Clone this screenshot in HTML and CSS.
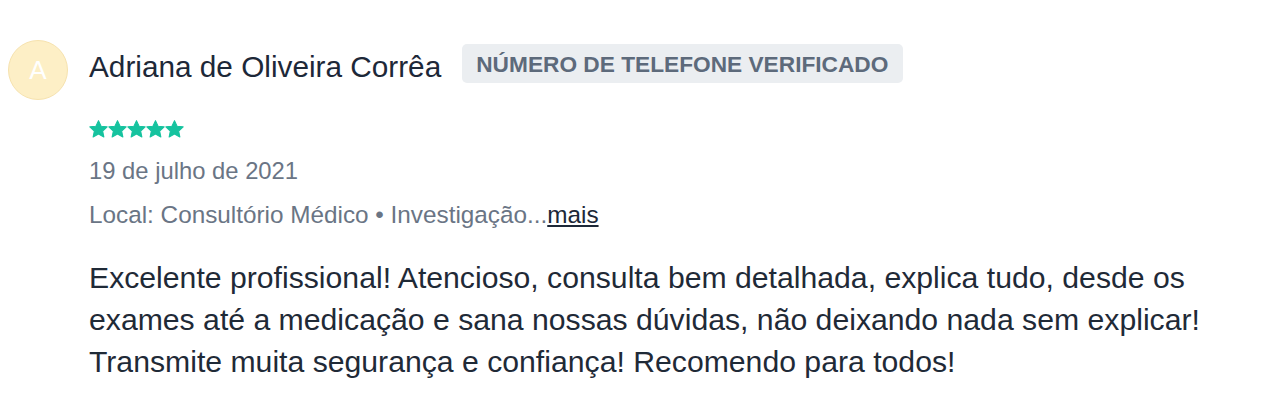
FILE: index.html
```html
<!DOCTYPE html>
<html lang="pt">
<head>
<meta charset="utf-8">
<link rel="stylesheet" href="styles.css">
</head>
<body>
<div class="review">
  <div class="avatar">A</div>
  <div class="content">
    <div class="header">
      <span class="name">Adriana de Oliveira Corrêa</span>
      <span class="badge">NÚMERO DE TELEFONE VERIFICADO</span>
    </div>
    <div class="stars">
      <svg viewBox="1.5 1.5 21 19.8"><path d="M12 2.2l2.95 6.3 6.85.8-5.1 4.7 1.4 6.8L12 17.4l-6.1 3.4 1.4-6.8-5.1-4.7 6.85-.8z"/></svg>
      <svg viewBox="1.5 1.5 21 19.8"><path d="M12 2.2l2.95 6.3 6.85.8-5.1 4.7 1.4 6.8L12 17.4l-6.1 3.4 1.4-6.8-5.1-4.7 6.85-.8z"/></svg>
      <svg viewBox="1.5 1.5 21 19.8"><path d="M12 2.2l2.95 6.3 6.85.8-5.1 4.7 1.4 6.8L12 17.4l-6.1 3.4 1.4-6.8-5.1-4.7 6.85-.8z"/></svg>
      <svg viewBox="1.5 1.5 21 19.8"><path d="M12 2.2l2.95 6.3 6.85.8-5.1 4.7 1.4 6.8L12 17.4l-6.1 3.4 1.4-6.8-5.1-4.7 6.85-.8z"/></svg>
      <svg viewBox="1.5 1.5 21 19.8"><path d="M12 2.2l2.95 6.3 6.85.8-5.1 4.7 1.4 6.8L12 17.4l-6.1 3.4 1.4-6.8-5.1-4.7 6.85-.8z"/></svg>
    </div>
    <div class="date">19 de julho de 2021</div>
    <div class="local">Local: Consultório Médico • Investigação...<a class="more" href="#">mais</a></div>
    <p class="text">Excelente profissional! Atencioso, consulta bem detalhada, explica tudo, desde os exames até a medicação e sana nossas dúvidas, não deixando nada sem explicar! Transmite muita segurança e confiança! Recomendo para todos!</p>
  </div>
</div>
</body>
</html>
```
FILE: styles.css
```css
html, body {
  margin: 0;
  padding: 0;
  background: #ffffff;
}
body {
  font-family: "Liberation Sans", Arial, sans-serif;
  color: #1f2a37;
}
.review {
  display: flex;
  gap: 21px;
  padding: 40px 8px 0 8px;
}
.avatar {
  flex: none;
  width: 58px;
  height: 58px;
  border-radius: 50%;
  background: #fdefc6;
  border: 1px solid #f6e2ae;
  color: #ffffff;
  font-size: 26px;
  display: flex;
  align-items: center;
  justify-content: center;
}
.content {
  flex: 1;
  padding-top: 4px;
}
.header {
  display: flex;
  align-items: flex-start;
  gap: 21px;
}
.name {
  font-size: 29.75px;
  line-height: 36px;
  margin-top: 5px;
  color: #1d2838;
}
.badge {
  background: #ebeef1;
  color: #5d6a7b;
  font-weight: bold;
  font-size: 22.7px;
  padding: 0 15px 0 14px;
  height: 39px;
  line-height: 40px;
  border-radius: 5px;
}
.stars {
  display: flex;
  margin-top: 35px;
  height: 17px;
}
.stars svg {
  width: 19px;
  height: 17.5px;
  fill: #16c39f;
  stroke: #16c39f;
  stroke-width: 1.2;
  stroke-linejoin: round;
}
.date {
  font-size: 23.8px;
  line-height: 28px;
  color: #6a7585;
  margin-top: 20px;
}
.local {
  font-size: 24.3px;
  line-height: 28px;
  color: #6a7585;
  margin-top: 16px;
}
.more {
  color: #1d2838;
  text-decoration: underline;
}
.text {
  font-size: 30.2px;
  line-height: 42px;
  color: #1f2a37;
  margin: 28px 0 0 0;
  max-width: 1135px;
}
```
